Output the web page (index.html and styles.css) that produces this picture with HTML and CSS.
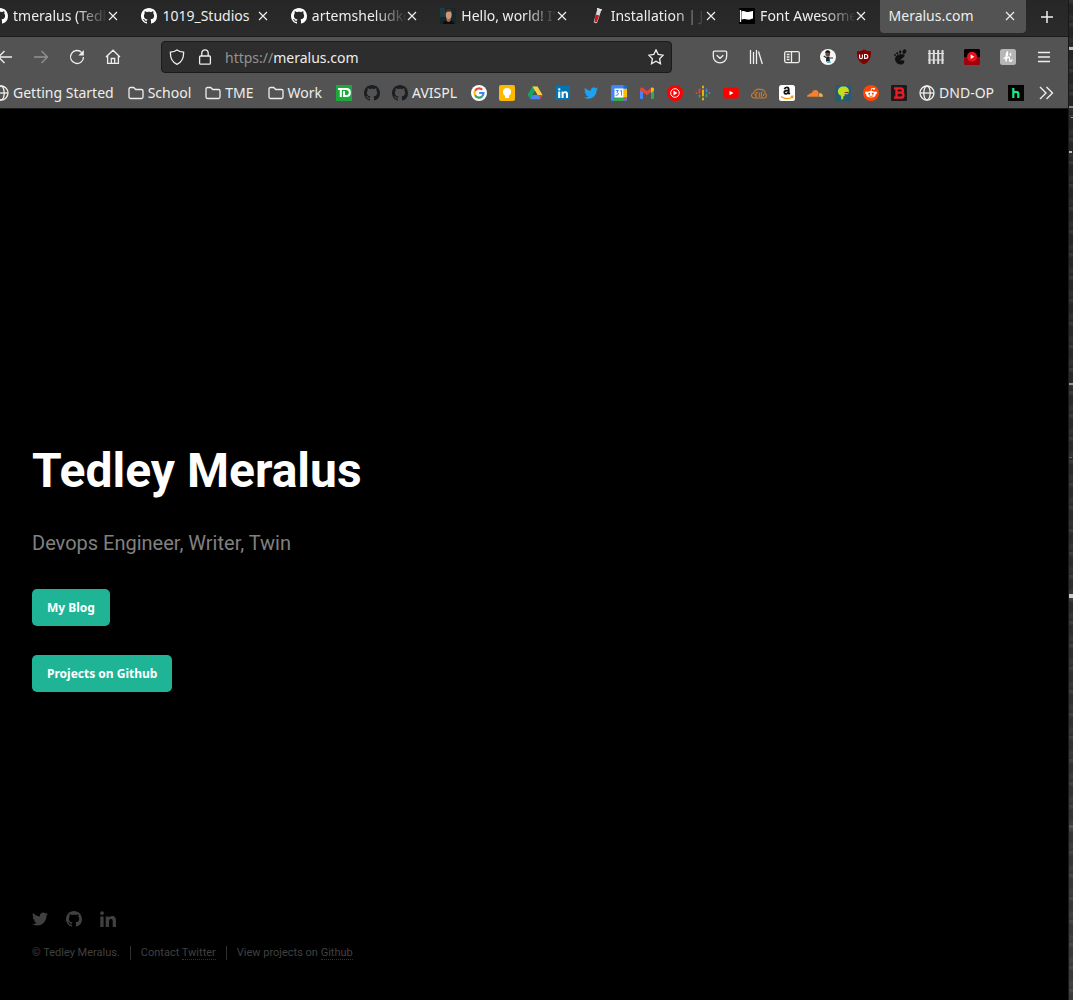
FILE: index.html
```html
<!DOCTYPE html>
<html lang="en">
<head>
<meta charset="utf-8">
<title>Meralus.com</title>
<link rel="stylesheet" href="styles.css">
</head>
<body>
<svg class="sprite" aria-hidden="true">
  <symbol id="github" viewBox="0 0 16 16"><path d="M8 0C3.58 0 0 3.58 0 8c0 3.54 2.29 6.53 5.47 7.59.4.07.55-.17.55-.38 0-.19-.01-.82-.01-1.49-2.01.37-2.53-.49-2.69-.94-.09-.23-.48-.94-.82-1.13-.28-.15-.68-.52-.01-.53.63-.01 1.08.58 1.23.82.72 1.21 1.87.87 2.33.66.07-.52.28-.87.51-1.07-1.78-.2-3.64-.89-3.64-3.95 0-.87.31-1.59.82-2.15-.08-.2-.36-1.02.08-2.12 0 0 .67-.21 2.2.82.64-.18 1.32-.27 2-.27s1.36.09 2 .27c1.53-1.04 2.2-.82 2.2-.82.44 1.1.16 1.92.08 2.12.51.56.82 1.27.82 2.15 0 3.07-1.87 3.75-3.65 3.95.29.25.54.73.54 1.48 0 1.07-.01 1.93-.01 2.2 0 .21.15.46.55.38A8.01 8.01 0 0 0 16 8c0-4.42-3.58-8-8-8z"/></symbol>
  <symbol id="twitter" viewBox="0 0 24 24"><path d="M23.953 4.57a10 10 0 0 1-2.825.775 4.958 4.958 0 0 0 2.163-2.723c-.951.555-2.005.959-3.127 1.184a4.92 4.92 0 0 0-8.384 4.482C7.69 8.095 4.067 6.13 1.64 3.162a4.822 4.822 0 0 0-.666 2.475c0 1.71.87 3.213 2.188 4.096a4.904 4.904 0 0 1-2.228-.616v.06a4.923 4.923 0 0 0 3.946 4.827 4.996 4.996 0 0 1-2.212.085 4.936 4.936 0 0 0 4.604 3.417 9.867 9.867 0 0 1-6.102 2.105c-.39 0-.779-.023-1.17-.067a13.995 13.995 0 0 0 7.557 2.209c9.053 0 13.998-7.496 13.998-13.985 0-.21 0-.42-.015-.63A9.935 9.935 0 0 0 24 4.59z"/></symbol>
  <symbol id="linkedin" viewBox="0 0 16 16"><path d="M.3 5.4h3.3V16H.3zM2 .2a1.9 1.9 0 1 1 0 3.8 1.9 1.9 0 0 1 0-3.8zM5.7 5.4h3.1v1.4c.5-.9 1.600-1.700 3.200-1.700 3.300 0 4 2.100 4 5V16h-3.300v-5.200c0-1.200 0-2.800-1.700-2.800S9 9.300 9 10.700V16H5.700z"/></symbol>
  <symbol id="folder" viewBox="0 0 16 16"><path d="M1 4a1.500 1.500 0 0 1 1.500-1.500h3.200l2 2h5.800A1.500 1.500 0 0 1 15 6v6a1.500 1.500 0 0 1-1.500 1.500h-11A1.500 1.500 0 0 1 1 12z" fill="none" stroke="currentColor" stroke-width="1.300"/></symbol>
  <symbol id="globe" viewBox="0 0 16 16"><g fill="none" stroke="currentColor" stroke-width="1.300"><circle cx="8" cy="8" r="7"/><ellipse cx="8" cy="8" rx="3.200" ry="7"/><path d="M1 8h14"/></g></symbol>
  <symbol id="close" viewBox="0 0 10 10"><path d="M1 1l8 8M9 1L1 9" stroke="currentColor" stroke-width="1.200"/></symbol>
</svg>

<div class="desktop">
<div class="window">
  <header class="chrome">
    <div class="tabbar">
      <div class="tabs">
        <div class="tab"><svg class="fav white"><use href="#github"/></svg><span class="label fade">tmeralus (Tedley</span><button class="close" aria-label="Close tab"><svg><use href="#close"/></svg></button></div>
        <div class="tab"><svg class="fav white"><use href="#github"/></svg><span class="label">1019_Studios</span><button class="close" aria-label="Close tab"><svg><use href="#close"/></svg></button></div>
        <div class="tab"><svg class="fav white"><use href="#github"/></svg><span class="label fade">artemsheludko</span><button class="close" aria-label="Close tab"><svg><use href="#close"/></svg></button></div>
        <div class="tab"><svg class="fav" viewBox="0 0 16 16"><rect width="16" height="16" fill="#16282b"/><path d="M0 0h5v9H0z" fill="#1f3d40"/><path d="M3 16c0-3 3-4 5.500-4s5.500 1 6 4z" fill="#0a0d10"/><path d="M6.500 9h4v4l-2 1-2-1z" fill="#a06a50"/><ellipse cx="8.700" cy="6.500" rx="3" ry="4.500" fill="#cf9878"/><path d="M5.500 6C5 2 7 .7 9 1c2.500 0 3.500 2 2.800 5l-.8-2.500-4 .3z" fill="#4a2d20"/></svg><span class="label fade">Hello, world! I'm</span><button class="close" aria-label="Close tab"><svg><use href="#close"/></svg></button></div>
        <div class="tab"><svg class="fav" viewBox="0 0 16 16"><path d="M7.500.6l4 1.200-4.200 12.500c-.5 1.500-3.800 1-3.400-1z" fill="#d8d8d8"/><path d="M5.600 6.500l3.600 1-2.300 6.300c-.4 1-2.600.6-2.400-.7z" fill="#c8171c"/><path d="M7 .5l5 1.500" stroke="#f4f4f4" stroke-width="1.200"/></svg><span class="label fade">Installation | Jekyll</span><button class="close" aria-label="Close tab"><svg><use href="#close"/></svg></button></div>
        <div class="tab"><svg class="fav" viewBox="0 0 16 16"><rect width="16" height="16" rx="1" fill="#000"/><path d="M1.500 2v12" stroke="#fff" stroke-width="1.300"/><path d="M2.500 3.500c3-1.500 4 .8 6.500.6 2-.1 3-.8 5-1v7.500c-2 .4-3 1.200-5 1-2.500-.2-3.500-1.500-6.500 0z" fill="#fff"/></svg><span class="label fade">Font Awesome</span><button class="close" aria-label="Close tab"><svg><use href="#close"/></svg></button></div>
        <div class="tab active"><span class="label">Meralus.com</span><button class="close" aria-label="Close tab"><svg><use href="#close"/></svg></button></div>
      </div>
      <button class="newtab" aria-label="New tab"><svg viewBox="0 0 16 16"><path d="M8 2v12M2 8h12" stroke="currentColor" stroke-width="1.500"/></svg></button>
    </div>

    <div class="navbar">
      <div class="tools">
        <button class="tool" aria-label="Back"><svg viewBox="0 0 16 16"><path d="M15 8H2M7.500 2L1.500 8l6 6"/></svg></button>
        <button class="tool dim" aria-label="Forward"><svg viewBox="0 0 16 16"><path d="M1 8h13M8.500 2l6 6-6 6"/></svg></button>
        <button class="tool" aria-label="Reload"><svg viewBox="0 0 16 16"><path d="M12.800 3.600A6.500 6.500 0 1 0 14.500 8"/><path d="M14.800 1v5.500H9.300z" fill="currentColor" stroke="none"/></svg></button>
        <button class="tool" aria-label="Home"><svg viewBox="0 0 16 16"><path d="M1 8l7-6.800L15 8M2.600 6.800v7.600h10.800V6.800M6.300 14.400V9.500h3.400v4.900"/></svg></button>
      </div>
      <div class="urlbar">
        <svg class="line" viewBox="0 0 16 16"><path d="M8 .9c2 1.500 4 2 6.600 2.300C14.800 9 12.800 13.200 8 15.300 3.200 13.200 1.200 9 1.400 3.200 4 2.900 6 2.400 8 .9z"/></svg>
        <svg class="line" viewBox="0 0 16 16"><rect x="2.600" y="7" width="10.800" height="8.200" rx="1"/><path d="M4.800 7V4a3.200 3.200 0 0 1 6.400 0v3"/></svg>
        <span class="url"><span class="scheme">https://</span>meralus.com</span>
        <svg class="line" viewBox="0 0 16 16"><path d="M8 .9l2.200 4.600 5 .7-3.600 3.500.9 5L8 12.300l-4.500 2.400.9-5L.8 6.200l5-.7z"/></svg>
      </div>
      <div class="tools">
        <button class="tool" aria-label="Pocket"><svg viewBox="0 0 16 16"><path d="M2.500 2.200h11A1.200 1.200 0 0 1 14.700 3.400v3.800a6.700 6.700 0 0 1-13.400 0V3.400A1.200 1.200 0 0 1 2.500 2.200zM4.700 6.200L8 9.300l3.300-3.100"/></svg></button>
        <button class="tool" aria-label="Library"><svg viewBox="0 0 16 16"><path d="M2.500 1v14M5.500 3v12M8.500 1v14M10.500 2.500L14.300 15"/></svg></button>
        <button class="tool" aria-label="Sidebars"><svg viewBox="0 0 16 16"><rect x=".7" y="2.600" width="14.600" height="11" rx="1.500"/><path d="M7.500 2.600v11M2.700 5.500h2.800M2.700 8h2.800M2.700 10.500h2.800"/></svg></button>
        <button class="tool" aria-label="Account"><svg viewBox="0 0 16 16" class="solid"><circle cx="8" cy="8" r="8" fill="#f6f8f8"/><path d="M5.500 3h4.500v3.200c-.5 1.300-3.500 1.500-4.500 0z" fill="#6b4636"/><path d="M5.200 4.300C5 .3 10.500.3 10.300 4.300l-.8-.8H6z" fill="#111"/><path d="M6.300 7.500h3.200l.4 5H6z" fill="#1c252b"/><path d="M9.500 9h3.500M6.500 8.800L3.700 7" stroke="#26333b" stroke-width="1.200"/><path d="M7 12.500h3.800v1.500H7z" fill="#55b4c0"/></svg></button>
        <button class="tool" aria-label="uBlock Origin"><svg viewBox="0 0 16 16" class="solid"><path d="M8 .5c2 1.300 4 1.800 7 1.800 0 6.500-1 10-7 13.200C2 12.300 1 8.800 1 2.300c3 0 5-.5 7-1.800z" fill="#800000"/><path d="M3.600 5.500v2.700a1.300 1.300 0 0 0 2.800 0V5.500" fill="none" stroke="#fff" stroke-width="1.100"/><path d="M8.600 5.500h1.300a1.900 1.900 0 0 1 0 3.900H8.600z" fill="none" stroke="#fff" stroke-width="1.100"/></svg></button>
        <button class="tool" aria-label="GNOME Shell"><svg viewBox="0 0 16 16" class="solid"><g fill="#111"><path d="M10.500 5.200C6 4.700 2 7.200 3.300 11.500c.8 2.600 3 4 5.400 4 2.600 0 4.300-2 3.400-3.500-.8-1.400-2.500 0-3.500-.6-1.200-.8 4.500-3.300 4-5.200-.2-.700-1.100-.9-2.100-1z"/><ellipse cx="12.400" cy="2.600" rx="1.800" ry="2.400" transform="rotate(25 12.400 2.600)"/><ellipse cx="8.200" cy="3" rx="1.100" ry="1.700"/><ellipse cx="5.300" cy="4.300" rx=".9" ry="1.400"/><ellipse cx="3" cy="6" rx=".8" ry="1.200"/></g></svg></button>
        <button class="tool" aria-label="Containers"><svg viewBox="0 0 16 16" class="solid"><path d="M1.500 1v14M5.800 1v14M10.200 1v14M14.500 1v14" stroke="#dedede" stroke-width="2" fill="none"/><path d="M0 4.500h16M0 11h16" stroke="#dedede" stroke-width="1.200"/></svg></button>
        <button class="tool" aria-label="YouTube enhancer"><svg viewBox="0 0 16 16" class="solid"><rect width="16" height="16" rx="1.500" fill="#a1000b"/><path d="M0 8V1.500A1.500 1.500 0 0 1 1.500 0h13A1.500 1.500 0 0 1 16 1.500V8z" fill="#080000"/><circle cx="8" cy="7.800" r="5" fill="#e8101b"/><path d="M6.700 5.500v4.600l3.600-2.300z" fill="#fff"/></svg></button>
        <button class="tool" aria-label="Honey"><svg viewBox="0 0 16 16" class="solid"><rect width="16" height="16" rx="2.500" fill="#b5b6b8"/><path d="M4 9.300C7.500 8 8 5 7.300 3c-1.300.5-1.300 6-1.300 9.500 0-2.500 1.300-4.500 2.800-4.500 1.400 0 .2 3.800 1.300 4.300.7.200 1.400-.4 1.900-1.300M10.500 6.300V4.500" fill="none" stroke="#fff" stroke-width="1.400" stroke-linecap="round"/></svg></button>
        <button class="tool" aria-label="Menu"><svg viewBox="0 0 16 16"><path d="M2 3.500h12M2 8h12M2 12.500h12"/></svg></button>
      </div>
    </div>

    <nav class="bookmarks" aria-label="Bookmarks">
      <a class="named" href="#"><svg><use href="#globe"/></svg>Getting Started</a>
      <a class="named" href="#"><svg><use href="#folder"/></svg>School</a>
      <a class="named" href="#"><svg><use href="#folder"/></svg>TME</a>
      <a class="named" href="#"><svg><use href="#folder"/></svg>Work</a>
      <a href="#" aria-label="TD"><svg viewBox="0 0 16 16"><rect width="16" height="16" fill="#1da83c"/><path d="M2 4h6.500M4.800 4v8M8 4h2.500c4.500 0 4.500 7 0 7H8V6" fill="none" stroke="#fff" stroke-width="2"/></svg></a>
      <a href="#" aria-label="GitHub"><svg class="dark"><use href="#github"/></svg></a>
      <a class="named" href="#"><svg class="dark"><use href="#github"/></svg>AVISPL</a>
      <a href="#" aria-label="Google"><svg viewBox="0 0 16 16"><circle cx="8" cy="8" r="8" fill="#fff"/><g fill="none" stroke-width="2.200"><path d="M11.200 4.800A4.500 4.500 0 0 0 4.100 5.700" stroke="#ea4335"/><path d="M4.100 5.700a4.500 4.500 0 0 0 0 4.600" stroke="#fbbc05"/><path d="M4.100 10.300a4.500 4.500 0 0 0 7 1.100" stroke="#34a853"/><path d="M11.100 11.400A4.500 4.500 0 0 0 12.500 8H8.200" stroke="#4285f4"/></g></svg></a>
      <a href="#" aria-label="Keep"><svg viewBox="0 0 16 16"><rect width="16" height="16" rx="2" fill="#fdb900"/><circle cx="8" cy="7" r="4" fill="#fff"/><path d="M6 10h4v3H6z" fill="#fff"/></svg></a>
      <a href="#" aria-label="Drive"><svg viewBox="0 0 16 16"><path d="M5.500 1.500h5L8 6 3.200 14 .5 9.800z" fill="#16a462"/><path d="M5.500 1.500h5L15.500 10h-5z" fill="#ffcf48"/><path d="M3.200 14.300L5.600 10h9.900l-2.600 4.300z" fill="#4688f4"/><path d="M8 6l2.400 4H5.600z" fill="#535353"/><path d="M12 10h3.500l-2.600 4.300z" fill="#e94235"/></svg></a>
      <a href="#" aria-label="LinkedIn"><svg viewBox="0 0 16 16"><rect x="1" y="1" width="14" height="14" fill="#0077b5"/><use href="#linkedin" x="3" y="3" width="10" height="10" fill="#fff"/></svg></a>
      <a href="#" aria-label="Twitter"><svg viewBox="0 0 16 16"><use href="#twitter" x="1" y="1" width="14" height="14" fill="#1da1f2"/></svg></a>
      <a href="#" aria-label="Calendar"><svg viewBox="0 0 16 16"><rect width="16" height="16" rx="1.500" fill="#4285f4"/><path d="M12.500 3.500H16v9h-3.500z" fill="#fbbc04"/><path d="M3 12.500h9.500V16H3z" fill="#34a853"/><path d="M12.500 12.500H16L12.500 16z" fill="#ea4335"/><path d="M12.500 0h2A1.500 1.500 0 0 1 16 1.500v2h-3.500z" fill="#1967d2"/><rect x="3.500" y="3.500" width="9" height="9" fill="#fff"/><path d="M4.700 5.500h2.600L6 7.500c2.200 0 2 3-1.400 2.800M9.200 6.200l1.300-.8v5.200" fill="none" stroke="#4285f4" stroke-width="1"/></svg></a>
      <a href="#" aria-label="Gmail"><svg viewBox="0 0 16 16"><path d="M1 4h3v10H2a1 1 0 0 1-1-1z" fill="#4285f4"/><path d="M12 4h3v9a1 1 0 0 1-1 1h-2z" fill="#34a853"/><path d="M1 4.500C1 2.500 3 2 4 3l4 3 4-3v4l-4 3.300L1 5.500z" fill="#ea4335"/><path d="M12 3c1-1 3-.5 3 1.500v1L12 8z" fill="#fbbc04"/></svg></a>
      <a href="#" aria-label="YouTube Music"><svg viewBox="0 0 16 16"><circle cx="8" cy="8" r="8" fill="#f00"/><circle cx="8" cy="8" r="4.300" fill="none" stroke="#fff"/><path d="M6.500 5.600v4.800L10.400 8z" fill="#fff"/></svg></a>
      <a href="#" aria-label="Podcasts"><svg viewBox="0 0 16 16" fill="none" stroke-width="1.800" stroke-linecap="round"><path d="M8 1.500v1M8 5.500v5M8 13.500v1" stroke="#fbbc04"/><path d="M4.500 4.500v3M1.500 8v.2" stroke="#ea4335"/><path d="M4.500 10.500v1.200M11.500 9.500v2" stroke="#34a853"/><path d="M11.500 4.500v2M14.500 8v.2" stroke="#4285f4"/></svg></a>
      <a href="#" aria-label="YouTube"><svg viewBox="0 0 16 16"><rect x=".2" y="2.400" width="15.600" height="11.200" rx="3" fill="#f00"/><path d="M6.500 5.700v4.600L10.500 8z" fill="#fff"/></svg></a>
      <a href="#" aria-label="Cloud"><svg viewBox="0 0 16 16" fill="none" stroke="#d07a25" stroke-width="1.100"><path d="M3 13C-.3 12.500-.3 8.500 2.700 8 3.500 5 6.500 3.500 9 4.500c3.500-.5 5.200 1.500 5 4 2.200 1 1.700 4.300-.7 4.500zM5.500 12.500c-1.500-2.500-.5-4.500 1-5.500M8.300 7.500v4.500M11 6.500c-1 2-1 4 0 6M12.500 9v2M3.500 10h2.300"/></svg></a>
      <a href="#" aria-label="Amazon"><svg viewBox="0 0 16 16"><rect width="16" height="16" rx="2.500" fill="#fff"/><path d="M5.500 4.300C6 1.800 9.700 1.800 9.700 4.300v3.600l1 1.400M9.700 5.300C6.700 5.300 5.200 6 5.300 7.500c.2 2 3.300 2 4.400-.6" fill="none" stroke="#111" stroke-width="1.800"/><path d="M2 11.500c4 2.800 8 2.700 11.500.8M11.800 11.400l2.200-.2-.5 2" fill="none" stroke="#f90" stroke-width="1.200"/></svg></a>
      <a href="#" aria-label="Cloudflare"><svg viewBox="0 0 16 16"><path d="M0 11.700c0-1.600 1-2.300 2.200-2.200C2.500 8 4 8.200 4.500 8.600 6 4 11 4 11.700 8.300l-.6 3.400z" fill="#f4812d"/><path d="M11.500 11.700l1-3.600c2.200.1 3.500 1.500 3.500 3.600z" fill="#faad3f"/></svg></a>
      <a href="#" aria-label="Comics"><svg viewBox="0 0 16 16"><rect width="16" height="16" fill="#245d73"/><path d="M3 6c0-3 3-5 6-4.500 3 0 5 2 5 5l-1 2.800H9l1 1.500-2 1 .5 1.700L6.500 15l-.7-4.500C4 10 2.800 8.500 3 6z" fill="#c2df1e"/><path d="M9 7.300l4.800-.6c-.2 1.500-2 2.300-4.800.6z" fill="#9b1c20"/></svg></a>
      <a href="#" aria-label="Reddit"><svg viewBox="0 0 16 16"><circle cx="8" cy="8" r="8" fill="#ff4500"/><g fill="#fff"><ellipse cx="8" cy="9.300" rx="4.700" ry="3.300"/><circle cx="3.200" cy="7.700" r="1.200"/><circle cx="12.800" cy="7.700" r="1.200"/><circle cx="11" cy="3.700" r="1"/></g><path d="M8 6l.7-2.700 2.300.5" fill="none" stroke="#fff" stroke-width=".8"/><path d="M6 10.700c1 .9 3 .9 4 0" fill="none" stroke="#ff4500" stroke-width=".8"/><circle cx="6.200" cy="8.700" r="1" fill="#ff4500"/><circle cx="9.800" cy="8.700" r="1" fill="#ff4500"/></svg></a>
      <a href="#" aria-label="Bitdefender"><svg viewBox="0 0 16 16"><rect width="16" height="16" rx="1" fill="#1b1b1d"/><path d="M3 3.300h6.500c3.300 0 3.300 4.400 0 4.400H6M9.500 7.700c4 0 4 5 0 5H3M5.500 3v10" fill="none" stroke="#ed1c24" stroke-width="2.300"/></svg></a>
      <a class="named" href="#"><svg><use href="#globe"/></svg>DND-OP</a>
      <a href="#" aria-label="Hulu"><svg viewBox="0 0 16 16"><rect width="16" height="16" fill="#030303"/><path d="M5.300 3v10M5.300 8.500c0-2.200 5-2.200 5 0V13" fill="none" stroke="#1ce783" stroke-width="2.200"/></svg></a>
      <button class="more" aria-label="More bookmarks"><svg viewBox="0 0 16 16"><path d="M2 2l6 6-6 6M8.500 2l6 6-6 6" fill="none" stroke="currentColor" stroke-width="1.400"/></svg></button>
    </nav>
  </header>

  <div class="page">
    <main class="hero">
      <h1>Tedley Meralus</h1>
      <p class="tagline">Devops Engineer, Writer, Twin</p>
      <button class="cta">My Blog</button>
      <button class="cta">Projects on Github</button>
    </main>
    <footer class="footer">
      <div class="social">
        <a href="#" aria-label="Twitter"><svg><use href="#twitter"/></svg></a>
        <a href="#" aria-label="GitHub"><svg><use href="#github"/></svg></a>
        <a href="#" aria-label="LinkedIn"><svg><use href="#linkedin"/></svg></a>
      </div>
      <ul class="legal">
        <li>© Tedley Meralus.</li>
        <li>Contact <a href="#">Twitter</a></li>
        <li>View projects on <a href="#">Github</a></li>
      </ul>
    </footer>
  </div>
</div>
<div class="wallpaper"></div>
</div>
</body>
</html>
```
FILE: styles.css
```css
* { box-sizing: border-box; }

body {
  margin: 0;
  background: #000;
  font-family: "Noto Sans", sans-serif;
  font-size: 14px;
  overflow-x: hidden;
}

button {
  margin: 0;
  padding: 0;
  border: 0;
  background: none;
  color: inherit;
  font: inherit;
}

a { color: inherit; text-decoration: none; }
svg { display: block; flex: none; width: 16px; height: 16px; }
.sprite { position: absolute; width: 0; height: 0; }

.desktop { display: flex; min-height: 100vh; }
.window {
  flex: 1;
  min-width: 0;
  display: flex;
  flex-direction: column;
  overflow: hidden;
}
.wallpaper {
  width: 5px;
  border-left: 1px solid #181818;
  background:
    linear-gradient(#bbb, #bbb) 0 47px / 4px 3px no-repeat,
    linear-gradient(#888, #888) 0 106px / 4px 2px no-repeat,
    linear-gradient(#999, #999) 2px 117px / 2px 1px no-repeat,
    linear-gradient(#bbb, #bbb) 0 151px / 3px 2px no-repeat,
    linear-gradient(#999, #999) 0 383px / 4px 2px no-repeat,
    linear-gradient(#666, #666) 0 457px / 3px 1px no-repeat,
    linear-gradient(#ccc, #ccc) 0 594px / 4px 4px no-repeat,
    linear-gradient(#555, #555) 0 825px / 4px 3px no-repeat,
    repeating-linear-gradient(rgba(255, 255, 255, 0.08) 0 2px, transparent 5px 13px, rgba(255, 255, 255, 0.05) 17px, transparent 23px),
    linear-gradient(#242424, #2c2c2c 60%, #3a3a3a);
}

/* Browser chrome */
.chrome {
  background: #535353;
  color: #eeeeec;
  border-bottom: 1px solid #1b1b1b;
}

.tabbar {
  display: flex;
  height: 37px;
  padding-bottom: 3px;
  background: linear-gradient(#262626, #2b2b2b);
  border-bottom: 1px solid #1b1b1b;
}
.tabs {
  flex: 1;
  min-width: 0;
  display: flex;
  gap: 3px;
  margin-left: -17px;
}
.tab {
  flex: 1 1 0;
  min-width: 0;
  display: flex;
  align-items: center;
  padding: 0 11px 2px 9px;
}
.tab.active { background: #535353; border-radius: 0 0 4px 4px; }
.fav { margin-right: 5px; }
.fav.white { fill: #fff; }
.label { flex: 1; min-width: 0; overflow: hidden; white-space: nowrap; }
.fade {
  -webkit-mask-image: linear-gradient(to left, transparent, #000 32px);
  mask-image: linear-gradient(to left, transparent, #000 32px);
}
.close svg { width: 10px; height: 10px; }
.newtab { width: 42px; display: grid; place-items: center; }

.navbar { display: flex; align-items: center; height: 40px; padding-right: 6px; }
.tools { display: flex; }
.tools:first-child { margin-left: -13px; }
.tool {
  width: 36px;
  height: 32px;
  display: grid;
  place-items: center;
  fill: none;
  stroke: currentColor;
  stroke-width: 1.3;
}
.tool.dim { opacity: 0.4; }
.solid { stroke: none; }
.urlbar {
  flex: 1;
  display: flex;
  align-items: center;
  gap: 12px;
  height: 32px;
  margin: 0 30px;
  padding: 0 7px;
  background: #2d2d2d;
  border: 1px solid #1b1b1b;
  border-radius: 4px;
}
.url { flex: 1; }
.scheme { color: #949494; }
.line { fill: none; stroke: currentColor; stroke-width: 1.3; }

.bookmarks {
  display: flex;
  align-items: center;
  gap: 12px;
  height: 31px;
  margin-left: -7px;
  white-space: nowrap;
}
.bookmarks a { display: flex; align-items: center; gap: 4px; }
.bookmarks .named { padding-right: 2px; }
.dark { fill: #1b1f23; }
.more { margin-left: 2px; }

/* Site */
.page {
  flex: 1;
  display: flex;
  flex-direction: column;
  padding: 0 32px 40px;
  background: #000;
  font-family: Roboto, sans-serif;
}
.hero {
  flex: 1;
  display: flex;
  flex-direction: column;
  justify-content: center;
  align-items: flex-start;
  padding-top: 115px;
}
.hero h1 { margin: 0; color: #fff; font-size: 48px; line-height: 56px; font-weight: 700; }
.tagline { margin: 30px 0 32px; color: #808080; font-size: 20px; line-height: 28px; }
.cta {
  height: 37px;
  padding: 0 15px;
  border-radius: 5px;
  background: #1fb496;
  color: #fff;
  font: 700 12px "Noto Sans", sans-serif;
}
.cta + .cta { margin-top: 29px; }

.social { display: flex; gap: 18px; fill: #404040; }
.legal {
  display: flex;
  margin: 19px 0 0;
  padding: 0;
  list-style: none;
  color: #404040;
  font-size: 11px;
  line-height: 14px;
}
.legal li + li { margin-left: 10px; padding-left: 10px; border-left: 1px solid #303030; }
.legal a { border-bottom: 1px dotted #303030; }
```
